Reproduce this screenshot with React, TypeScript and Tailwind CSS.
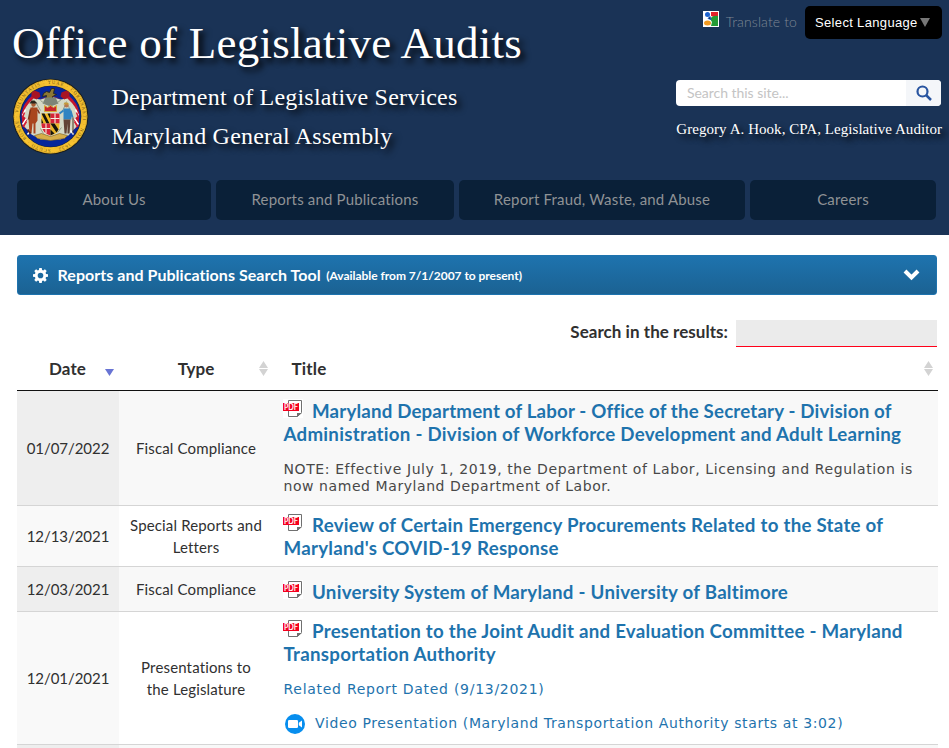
import React from "react";

const lato = "font-[Lato,'Liberation_Sans',sans-serif]";
const serif = "font-['Liberation_Serif',serif]";
const verdana = "font-['DejaVu_Sans',sans-serif]";

function Seal() {
  return (
    <svg width="77" height="77" viewBox="-0.5 -0.5 77 77" className="-mr-px shrink-0">
      <defs>
        <path id="ring" d="M38 70.6A32.6 32.6 0 1 1 38.1 70.600" />
      </defs>
      <circle cx="38" cy="38" r="37.800" fill="#1c1e1c" />
      <circle cx="38" cy="38" r="36.900" fill="#fcc632" />
      <circle cx="38" cy="38" r="36.300" fill="none" stroke="#8a6c1c" strokeWidth=".5" strokeDasharray="1 1" />
      <text fill="#6d5415" fontSize="4.500" className={serif}>
        <textPath href="#ring" textLength="196">SCUTO · BONAE · VOLUNTATIS · TUAE · CORONASTI · NOS · 1632</textPath>
      </text>
      <circle cx="38" cy="38" r="30.800" fill="#1b2535" />
      <circle cx="38" cy="38" r="30.200" fill="#06269a" />
      <path d="M20 17q-9 7-11 18l1 13 5 3 3-24 8-6 12-4 12 4 8 6 3 24 5-3 1-13q-2-11-11-18l-6 4-12-3-12 3z" fill="#c3152e" />
      <path d="M21 20q-9 8-11 17l5 4-4 6 8 9 9 5h20l8-4 9-10-4-6 5-4q-2-9-11-17l-7 1-10-3-10 3z" fill="#d5d9c6" />
      <path d="M13 31l-3 6m4 3-4 6m8 6-3 4m48-25 3 6m-4 3 4 6m-8 6 3 4" stroke="#fff" strokeWidth="1.500" />
      <path d="M12 34l-2 5m4 4-3 5m53-14 2 5m-4 4 3 5" stroke="#d81e34" strokeWidth="1.500" />
      <path d="M19 18v-4l3-2 5 2 1 4-4 3zM57 18v-4l-3-2-5 2-1 4 4 3z" fill="#a81424" />
      <path d="M31 15l3-2 3 1 2-4h3l-1 5 3 1-4 2v4l-7 1 1-6-4 1z" fill="#8b7837" stroke="#25220f" strokeWidth=".8" />
      <path d="M33 19h10l3 6-8 3-8-3z" fill="#7d8578" />
      <path d="M24 25l4 7m26-9-4 10m-29-6-3 7m38-7 2 8M28 22l4 3m13-1 4-3M28 50l3 5m18-6-4 5" stroke="#939a88" strokeWidth="1" />
      <path d="M32 27l3 2 3-2 3 2 3-2v6H32z" fill="#c8252e" stroke="#d8aa38" />
      <path d="M28.500 35h19v12q-1 9-9.500 11-8.500-2-9.500-11z" fill="#eee7c6" />
      <path d="M29 35h9v10h-9z" fill="#f1b822" />
      <path d="M29 35l5 10h3l-5-10zm6 0 3 6v-6zm-6 5 2 5h-2z" fill="#15140e" />
      <path d="M38 35h9v10h-9zM29 45h9v12q-8-2-9-10z" fill="#d42438" />
      <path d="M42.500 35v10M38 40h9M33.500 45v10M29 50h9" stroke="#f4eee2" strokeWidth="1.100" />
      <path d="M38 45h9q1 10-9 12z" fill="#eab527" />
      <path d="M38 45l6 9 2-3-4-6zm0 6 4 4-4 2z" fill="#15140e" />
      <circle cx="21" cy="26" r="2.200" fill="#a85c34" />
      <path d="M17 25h8l-3-3h-3z" fill="#2b261d" />
      <path d="M18 29h7v13l-2 3v10h-2v-10h-1l-1 10h-2l-1-14z" fill="#a9451e" />
      <path d="M25 31l2 4m-9-4-2 10" stroke="#7f3018" strokeWidth="1.500" />
      <path d="M15 51l3 4" stroke="#612718" strokeWidth="2" />
      <circle cx="54" cy="27" r="2.100" fill="#b77850" />
      <path d="M51 26h6l-2-2h-3z" fill="#c39938" />
      <path d="M51 30h7l1 11h-8z" fill="#3184c2" />
      <path d="M51 32l-4 3m11-3 2 7" stroke="#3184c2" strokeWidth="2" />
      <path d="M51 41h7l-1 14h-2v-10l-1 10h-2z" fill="#624335" />
      <path d="M60.500 39v16" stroke="#4a3521" />
      <path d="M22 57l7-2 9 3 9-3 8 2-3 3-14 2-13-2z" fill="#d7ae49" stroke="#765d25" strokeWidth=".6" />
    </svg>
  );
}

function GoogleIcon() {
  return (
    <svg width="16" height="16" viewBox="0 0 16 16">
      <path fill="#fff" d="M0 0h16v16H0z" />
      <path fill="#e4202c" d="M8 1h7v5h-4L8 5z" />
      <path fill="#259b35" d="M7 8q3-4 8-3v10H8l1-4z" />
      <circle cx="4.500" cy="3.500" r="2.500" fill="#1c62cf" />
      <path d="M5 7.500l2-2 1 3z" stroke="#1c62cf" />
      <ellipse cx="4.500" cy="12" rx="3.500" ry="2.500" fill="#f29a20" />
    </svg>
  );
}

function PdfIcon() {
  return (
    <svg width="20" height="19" viewBox="0 0 20 19" className="inline-block align-top">
      <path d="M0 0h20v19H0z" fill="#fff" />
      <path d="M5.500 1.500h13v12l-4 4h-9z" fill="#fff" stroke="#707070" />
      <path d="M14 18v-4h5z" fill="#707070" />
      <path d="M0 4h16v8H0z" fill="#f5001f" />
      <text x="1" y="11" textLength="14" lengthAdjust="spacingAndGlyphs" fontSize="8" fill="#fff" stroke="#fff" strokeWidth=".2" className={`font-normal tracking-normal ${verdana}`}>PDF</text>
    </svg>
  );
}

function ZoomIcon() {
  return (
    <svg width="20" height="20" viewBox="0 0 20 20">
      <circle cx="10" cy="10" r="10" fill="#078eee" />
      <rect x="3" y="6" width="10" height="8" rx="1.300" fill="#fff" />
      <path d="M13.800 8.700 17 6.500v7l-3.200-2.200z" fill="#fff" />
    </svg>
  );
}

function Sort() {
  return (
    <svg width="9" height="15" viewBox="0 0 9 15">
      <path d="M4.500 0 9 7H0zM0 8h9l-4.500 7z" fill="#d3d3d3" />
    </svg>
  );
}

function Row({ date, type, height, odd, children }: { date: string; type: string[]; height: string; odd?: boolean; children?: React.ReactNode }) {
  return (
    <div className={`flex shrink-0 border-b border-[#d5d5d5] ${height} ${odd ? "bg-[#f8f8f8]" : "bg-white"}`}>
      <div className={`flex w-[102px] shrink-0 items-center justify-center text-[15px] tracking-[-0.06px] ${odd ? "bg-[#eeeeee]" : "bg-[#f9f9f9]"}`}>{date}</div>
      <div className="flex w-[154px] shrink-0 flex-col justify-center text-center text-[15px] leading-[22px] tracking-[0.15px]">
        {type.map((t) => <span key={t}>{t}</span>)}
      </div>
      <div className="flex-1 pl-[10.500px]">{children}</div>
    </div>
  );
}

function Title({ lines, pad, first = "tracking-[0.25px]" }: { lines: string[]; pad: string; first?: string }) {
  return (
    <h3 className={`whitespace-nowrap text-[18.720px] font-bold leading-[23px] tracking-[0.26px] text-[#1e73ad] ${pad}`}>
      <span className="flex">
        <span className="-ml-[0.500px] -mt-px w-[29px] shrink-0"><PdfIcon /></span>
        <span className={first}>{lines[0]}</span>
      </span>
      {lines[1] && <span className="block">{lines[1]}</span>}
    </h3>
  );
}

const navItems = [
  ["About Us", "w-[194px]"],
  ["Reports and Publications", "w-[238px]"],
  ["Report Fraud, Waste, and Abuse", "w-[286px]"],
  ["Careers", "w-[186px]"],
];

export default function App() {
  return (
    <div className={`h-[748px] w-[949px] overflow-hidden bg-white text-[#303030] ${lato}`}>
      <header className="flex h-[235px] flex-col bg-[#1a3356]">
        <div className="flex h-[180px] justify-between">
          <div className={`pl-3 text-white ${serif} [text-shadow:4px_4px_6px_#000]`}>
            <h1 className="h-[78px] whitespace-nowrap pt-[17px] text-[45px] leading-[52px] tracking-[0.26px]">Office of Legislative Audits</h1>
            <div className="flex">
              <Seal />
              <div className="whitespace-nowrap pl-[23.500px] text-[24px] leading-[39px] tracking-[0.2px]">
                <div>Department of Legislative Services</div>
                <div>Maryland General Assembly</div>
              </div>
            </div>
          </div>
          <div className="flex w-[273px] flex-col pr-[7px]">
            <div className="flex h-[80px] justify-end pt-[6px]">
              <div className="mt-[5px]"><GoogleIcon /></div>
              <span className="ml-[7px] mr-[8px] mt-[6px] text-[14px] font-light leading-5 tracking-[0.12px] text-[#7d8794]">Translate to</span>
              <div className="flex h-[33px] w-[137px] items-center rounded-[5px] bg-black pl-[10px] font-['Liberation_Sans',sans-serif] text-[13px] tracking-[0.34px] text-white">
                <span className="whitespace-nowrap">Select Language</span>
                <svg width="10" height="9" className="ml-[2px]"><path d="M0 0h10L5 9z" fill="#777" /></svg>
              </div>
            </div>
            <div className="ml-auto mr-px flex h-[26px] w-[265px] overflow-hidden rounded-[4px] bg-white">
              <span className="flex-1 pl-[11px] text-[14px] leading-[26px] tracking-[-0.04px] text-[#c4c4c4]">Search this site...</span>
              <span className="flex w-[35px] items-center justify-center bg-[#f4f6f9]">
                <svg width="16" height="16" viewBox="0 0 16 16" fill="none" stroke="#2854a0"><circle cx="6.500" cy="6.500" r="5" strokeWidth="2.200" /><path d="m10 10 5 5" strokeWidth="2.500" /></svg>
              </span>
            </div>
            <div className={`mt-[13px] self-end whitespace-nowrap text-[15px] leading-5 tracking-[0.05px] text-white ${serif} [text-shadow:4px_4px_6px_#000]`}>Gregory A. Hook, CPA, Legislative Auditor</div>
          </div>
        </div>
        <nav className="flex gap-[5px] pl-[17px]">
          {navItems.map(([label, w]) => (
            <a key={label} className={`h-10 rounded-[5px] bg-[#0a2038] text-center text-[15px] leading-[39px] tracking-[0.18px] text-[#8f9295] ${w}`}>{label}</a>
          ))}
        </nav>
      </header>

      <main className="px-[17px] pt-5">
        <div className="flex h-10 w-[920px] items-center rounded-[3px] border border-[#1e73ae] bg-linear-to-b from-[#1e73ae] to-[#1b6293] pl-[14.500px] pr-[16px] font-bold text-white">
          <svg width="15" height="15" viewBox="0 0 16 16">
            <path fillRule="evenodd" fill="#fff" d="M6.700 0h2.600l.4 2.100 1.200.5L12.700 1.400l1.900 1.900-1.200 1.800.5 1.200 2.100.4v2.600l-2.100.4-.5 1.200 1.200 1.800-1.900 1.900-1.800-1.200-1.200.5-.4 2.100H6.700l-.4-2.100-1.200-.5-1.800 1.200-1.900-1.900 1.200-1.800-.5-1.200L0 9.300V6.700l2.100-.4.5-1.200L1.400 3.300l1.900-1.900 1.800 1.200 1.200-.5zM8 5a3 3 0 1 0 0 6 3 3 0 0 0 0-6z" />
          </svg>
          <span className="ml-[10px] whitespace-nowrap text-[16px] tracking-[0.04px]">Reports and Publications Search Tool</span>
          <span className="ml-[5.500px] mt-[2px] whitespace-nowrap text-[12px] tracking-[-0.03px]">(Available from 7/1/2007 to present)</span>
          <svg className="ml-auto" width="17" height="12" viewBox="0 0 17 12"><path d="m2 2 6.500 6.500L15 2" fill="none" stroke="#fff" strokeWidth="4" /></svg>
        </div>

        <div className="mt-[25px] flex h-[27px] w-[920px] justify-end">
          <label className="mr-[8px] text-[17px] font-bold leading-[24px] tracking-[0.04px]">Search in the results:</label>
          <div className="w-[201px] border-b border-[#ff0019] bg-[#ebebeb]" />
        </div>

        <div className="w-[921px]">
          <div className="flex h-11 items-center border-b border-[#111] text-[17px] font-bold leading-[22px]">
            <div className="flex w-[102px] items-center">
              <span className="w-[102px] text-center tracking-[0.1px]"><span className="mr-px">Date</span></span>
              <svg className="-ml-[14px] mt-[7px] shrink-0" width="9" height="7"><path d="M0 0h9L4.500 7z" fill="#6874d4" /></svg>
            </div>
            <div className="flex w-[154px] items-center">
              <span className="w-[154px] text-center">Type</span>
              <span className="-ml-[14px] shrink-0"><Sort /></span>
            </div>
            <div className="flex flex-1 items-center justify-between pl-[18.500px] pr-[5px]">
              <span className="tracking-[0.2px]">Title</span>
              <Sort />
            </div>
          </div>

          <Row odd height="h-[115px]" date="01/07/2022" type={["Fiscal Compliance"]}>
            <Title pad="pt-[9px]" first="tracking-[0.17px]" lines={["Maryland Department of Labor - Office of the Secretary - Division of", "Administration - Division of Workforce Development and Adult Learning"]} />
            <p className={`mt-[15px] whitespace-nowrap text-[14px] leading-[17px] tracking-[0.6px] text-[#484848] ${verdana}`}>
              <span className="block">NOTE: Effective July 1, 2019, the Department of Labor, Licensing and Regulation is</span>
              <span className="block tracking-[0.57px]">now named Maryland Department of Labor.</span>
            </p>
          </Row>
          <Row height="h-[61px]" date="12/13/2021" type={["Special Reports and", "Letters"]}>
            <Title pad="pt-[8px]" lines={["Review of Certain Emergency Procurements Related to the State of", "Maryland's COVID-19 Response"]} />
          </Row>
          <Row odd height="h-[45px]" date="12/03/2021" type={["Fiscal Compliance"]}>
            <Title pad="pt-[14px]" lines={["University System of Maryland - University of Baltimore"]} />
          </Row>
          <Row height="h-[133px]" date="12/01/2021" type={["Presentations to", "the Legislature"]}>
            <Title pad="pt-[8px]" lines={["Presentation to the Joint Audit and Evaluation Committee - Maryland", "Transportation Authority"]} />
            <div className={`whitespace-nowrap text-[14px] leading-[18px] text-[#1e73ad] ${verdana}`}>
              <a className="mt-[14px] block tracking-[0.72px]">Related Report Dated (9/13/2021)</a>
              <a className="mt-[14px] flex items-center tracking-[0.62px]"><span className="ml-[1.500px] mr-[10px] mt-[2px] w-5"><ZoomIcon /></span>Video Presentation (Maryland Transportation Authority starts at 3:02)</a>
            </div>
          </Row>
          <Row odd height="h-[45px]" date="" type={[]} />
        </div>
      </main>
    </div>
  );
}
